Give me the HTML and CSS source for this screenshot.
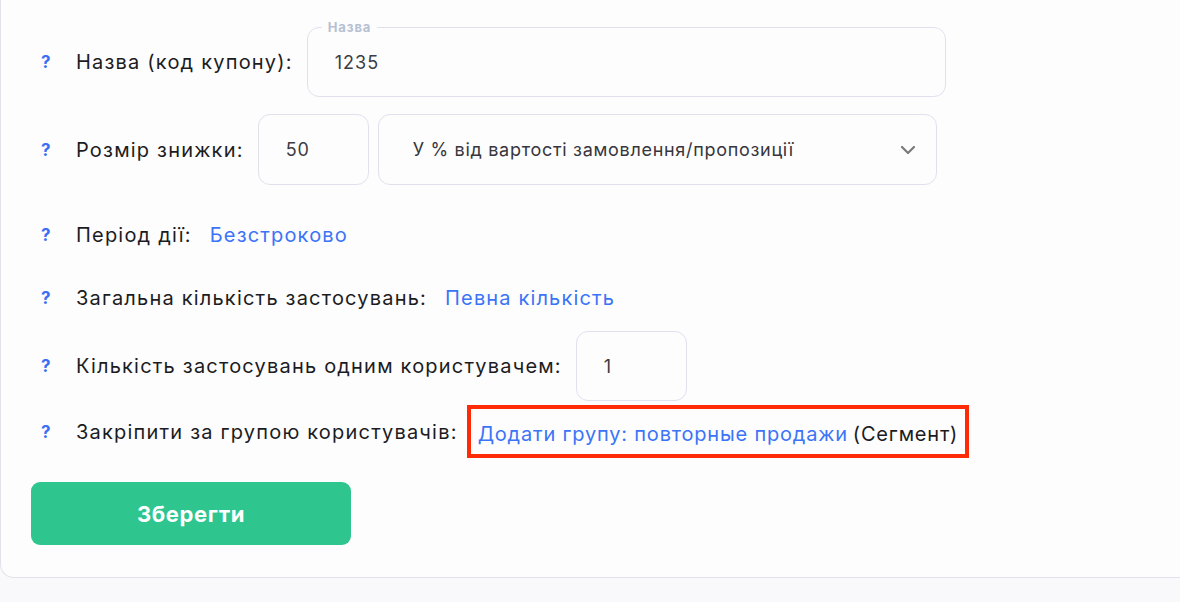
FILE: index.html
```html
<!DOCTYPE html>
<html lang="uk">
<head>
    <meta charset="UTF-8">
    <meta name="viewport" content="width=device-width, initial-scale=1.0">
    <title>Купон</title>
    <link rel="stylesheet" href="styles.css">
</head>
<body>

    <div class="coupon-card">
        <form class="coupon-form">
            <div class="form-row row-name">
                <span class="hint">?</span>
                <label class="row-label" for="code">Назва (код купону):</label>
                <div class="field field-name">
                    <span class="field-legend">Назва</span>
                    <input type="text" id="code" value="1235">
                </div>
            </div>

            <div class="form-row row-discount">
                <span class="hint">?</span>
                <label class="row-label" for="amount">Розмір знижки:</label>
                <div class="field field-small">
                    <input type="text" id="amount" value="50">
                </div>
                <div class="field field-select">
                    <span class="select-text">У % від вартості замовлення/пропозиції</span>
                    <svg class="chevron" width="16" height="10" viewBox="0 0 16 10">
                        <path d="M2 2 L8 8 L14 2" fill="none" stroke="#7a7a7a" stroke-width="2.2" stroke-linecap="round" stroke-linejoin="round"/>
                    </svg>
                </div>
            </div>

            <div class="form-row row-period">
                <span class="hint">?</span>
                <span class="row-label">Період дії:</span>
                <a href="#" class="row-link">Безстроково</a>
            </div>

            <div class="form-row row-total">
                <span class="hint">?</span>
                <span class="row-label">Загальна кількість застосувань:</span>
                <a href="#" class="row-link">Певна кількість</a>
            </div>

            <div class="form-row row-per-user">
                <span class="hint">?</span>
                <label class="row-label" for="peruser">Кількість застосувань одним користувачем:</label>
                <div class="field field-small">
                    <input type="text" id="peruser" value="1">
                </div>
            </div>

            <div class="form-row row-group">
                <span class="hint">?</span>
                <span class="row-label">Закріпити за групою користувачів:</span>
                <div class="group-box">
                    <a href="#" class="group-link">Додати групу: повторные продажи</a>
                    <span class="group-type">(Сегмент)</span>
                </div>
            </div>

            <button type="submit" class="save-btn">Зберегти</button>
        </form>
    </div>

</body>
</html>
```

FILE: styles.css
```css
* {
    box-sizing: border-box;
    font-family: Inter, 'Noto Sans', sans-serif;
}

body {
    margin: 0;
    padding: 0;
    background: #f9f9fb;
    height: 602px;
    overflow: hidden;
}

.coupon-card {
    background: #fdfdfe;
    border: 1px solid #e2e2ec;
    border-top: none;
    border-right: none;
    border-radius: 0 0 0 14px;
    padding: 27px 0 32px 30px;
}

.coupon-form {
    display: flex;
    flex-direction: column;
}

.form-row {
    display: flex;
    align-items: center;
}

.hint {
    width: 45px;
    padding-left: 10px;
    color: #3b6ff5;
    font-weight: bold;
    font-size: 17px;
}

.row-label {
    color: #1c1c1e;
    font-size: 20px;
    letter-spacing: 1.2px;
    margin-right: 14px;
}

.row-link {
    color: #3b74f6;
    font-size: 20px;
    letter-spacing: 1.15px;
    text-decoration: none;
    margin-left: 4px;
}

.row-name {
    height: 70px;
}

.row-discount {
    height: 71px;
    margin-top: 17px;
}

.row-period {
    height: 40px;
    margin-top: 30px;
}

.row-total {
    height: 40px;
    margin-top: 23px;
}

.row-per-user {
    height: 70px;
    margin-top: 13px;
}

.row-group {
    height: 53px;
    margin-top: 4px;
}

.field {
    position: relative;
    height: 100%;
    border: 1px solid #e1e1ee;
    border-radius: 12px;
    background: #fdfdfe;
    display: flex;
    align-items: center;
}

.field input {
    border: none;
    background: transparent;
    outline: none;
    width: 100%;
    height: 100%;
    padding: 0 0 0 27px;
    font-size: 18px;
    letter-spacing: 1px;
    color: #3c3c42;
}

.field-name {
    width: 639px;
}

.field-legend {
    position: absolute;
    top: -8px;
    left: 14px;
    padding: 0 6px;
    background: #fdfdfe;
    color: #b7c0d2;
    font-size: 13px;
    letter-spacing: 0.9px;
    font-weight: bold;
    line-height: 14px;
}

.field-small {
    width: 111px;
}

.field-select {
    width: 559px;
    margin-left: 9px;
    justify-content: space-between;
    padding: 0 20px 0 34px;
}

.select-text {
    color: #36363c;
    font-size: 18px;
    letter-spacing: 0.7px;
}

.group-box {
    height: 100%;
    border: 4px solid #ff2a06;
    display: flex;
    align-items: center;
    padding: 4px 7px 0 7px;
    margin-left: -5px;
    font-size: 20px;
    letter-spacing: 0.8px;
}

.group-link {
    color: #3b74f6;
    text-decoration: none;
    margin-right: 5px;
}

.group-type {
    color: #1c1c1e;
}

.save-btn {
    width: 320px;
    height: 63px;
    margin-top: 24px;
    background-color: #2ec58f;
    color: white;
    border: none;
    border-radius: 9px;
    font-size: 22px;
    letter-spacing: 0.6px;
    font-weight: bold;
    cursor: pointer;
}
```
